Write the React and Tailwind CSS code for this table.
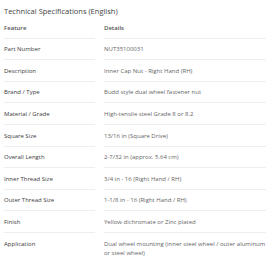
const rows = [
  ['Part Number', 'NUT35100031'],
  ['Description', 'Inner Cap Nut - Right Hand (RH)'],
  ['Brand / Type', 'Budd style dual wheel fastener nut'],
  ['Material / Grade', 'High-tensile steel Grade 8 or 8.2'],
  ['Square Size', '13/16 in (Square Drive)'],
  ['Overall Length', '2-7/32 in (approx. 5.64 cm)'],
  ['Inner Thread Size', '3/4 in - 16 (Right Hand / RH)'],
  ['Outer Thread Size', '1-1/8 in - 16 (Right Hand / RH)'],
  ['Finish', 'Yellow dichromate or Zinc plated'],
  ['Application', 'Dual wheel mounting (inner steel wheel / outer aluminum or steel wheel)'],
];

export default function App() {
  return (
    <div className="min-h-screen bg-white px-[4px] font-['Open_Sans',sans-serif]">
      <div className="h-[17px] pt-[6px] text-[7.5px] leading-[10px] text-[#444]">
        Technical Specifications (English)
      </div>

      <div className="grid grid-cols-[91px_1fr] gap-x-[9px] text-[6px] leading-[9px]">
        <div className="border-b border-[#eeeeee] pt-[6.6px] pb-[5px] font-semibold text-[#555]">Feature</div>
        <div className="border-b border-[#eeeeee] pt-[6.6px] pb-[5px] font-semibold text-[#555]">Details</div>

        {rows.map(([k, v]) => (
          <div key={k} className="contents">
            <div className="border-b border-[#eeeeee] pt-[6.6px] pb-[5px] font-medium text-[#3a3a3a]">{k}</div>
            <div className="border-b border-[#eeeeee] pt-[6.6px] pb-[5px] text-[#666]">{v}</div>
          </div>
        ))}
      </div>
    </div>
  );
}
